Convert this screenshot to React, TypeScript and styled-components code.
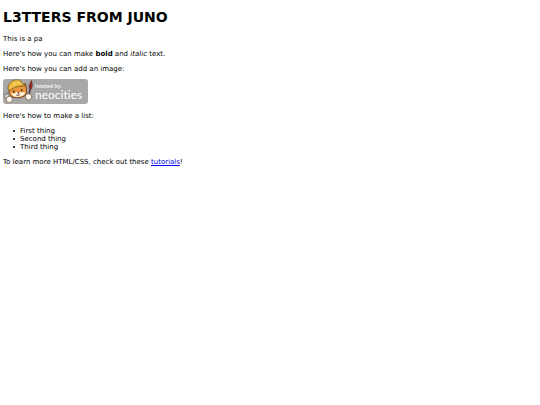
import React from "react";
import styled, { createGlobalStyle } from "styled-components";

const GlobalStyle = createGlobalStyle`
  body {
    margin: 0;
    background: #fff;
    color: #000;
    font-family: "DejaVu Sans", Verdana, sans-serif;
    font-size: 7px;
    line-height: 8px;
  }
`;

const Page = styled.main`
  padding: 9px 3px;
`;

const Title = styled.h1`
  margin: 0 0 9px;
  font-size: 14px;
  line-height: 17px;
`;

const Paragraph = styled.p`
  margin: 0 0 7px;
`;

const BadgeFigure = styled.figure`
  margin: 6px 0 8px;
`;

const IntroParagraph = styled(Paragraph)`
  margin-bottom: 6px;
`;

const Badge = styled.svg`
  display: block;
  width: 85px;
  height: 25px;
`;

const BadgeText = styled.text<{ $size: number }>`
  fill: #fff;
  font-family: Lato, "Open Sans", sans-serif;
  font-size: ${({ $size }) => $size}px;
  font-variant-ligatures: none;
`;

const List = styled.ul`
  margin: 0 0 7px;
  padding: 0 0 0 10px;
  list-style: none;
`;

const ListItem = styled.li`
  display: flex;
  align-items: center;
  gap: 5px;

  &::before {
    content: "";
    width: 2px;
    height: 2px;
    border-radius: 1px;
    background: #000;
  }
`;

const Link = styled.a`
  color: #0000ee;
  text-decoration: underline;
`;

function NeocitiesBadge() {
  return (
    <Badge viewBox="0 0 85 25" role="img" aria-label="Hosted by Neocities">
      <rect width="85" height="25" rx="3" fill="#a8a8a8" />
      {/* wrench */}
      <path d="M.8 14.3 2.6 16l1.7-.6.3-1.8 1.4 2-.6 2 2.5 3-1.6 1-2.7-3-2.2-.7Z" fill="#dedede" stroke="#555" strokeWidth=".6" />
      {/* brush */}
      <path d="m24.5 17 2.2-7.5 1.6.6-2.5 7.6Z" fill="#4b3838" />
      <path d="M26.2 9.4c-.7-3.2 1.2-4.9 2.3-8.1.9 3.3 1.3 6.4-.5 8.8Z" fill="#9e2925" stroke="#542523" strokeWidth=".6" />
      {/* head */}
      <path d="M7 8c-2 4-1 9 3.2 10.2 4.8 1.4 11.2.4 12.8-3.2 1.3-3 .3-7.3-1-10.7l-3 2.6Z" fill="#ed963b" stroke="#65391d" strokeWidth=".9" />
      <path d="M8.2 14.5c2.3-.8 3.8.2 5.3-1.6l2-.2c1.4 1.8 3.9.1 6.8.9-.7 4.5-12.2 6.5-14.1.9Z" fill="#fff5df" />
      <path d="M5 10.6C4.5 4.5 9.1.8 13.7.8c3.3 0 5.4 1.6 6.5 4.7L22.6 7c-5.3-.4-10.3.5-15.8 4.5Z" fill="#e9b83c" stroke="#80581e" strokeWidth=".8" />
      <path d="M7.2 7.5c3-3 6.8-3.9 11.6-3.2M11 2.2l1 5M15 1.4l1 4.2" fill="none" stroke="#ffe080" strokeWidth=".7" />
      <ellipse cx="10.9" cy="12.7" rx=".8" ry="1.1" fill="#2b201b" />
      <ellipse cx="18.8" cy="11.2" rx=".8" ry="1.1" fill="#2b201b" />
      <path d="m14.3 13.5 1.9-.3-.8 1.3Zm1.1 1-.3 1.2m-2 .2c1.5.9 3 .5 4-.6" fill="#8a382b" stroke="#65382b" strokeWidth=".5" />
      {/* paws */}
      <circle cx="6.3" cy="20.4" r="3.1" fill="#fffdf4" stroke="#705030" strokeWidth=".7" />
      <circle cx="25.6" cy="17.8" r="3.1" fill="#fffdf4" stroke="#705030" strokeWidth=".7" />
      <BadgeText x="32" y="9" $size={6}>hosted by</BadgeText>
      <BadgeText x="32" y="20" $size={12}>neocities</BadgeText>
    </Badge>
  );
}

export default function App() {
  return (
    <>
      <GlobalStyle />
      <Page>
        <Title>L3TTERS FROM JUNO</Title>
        <Paragraph>This is a pa</Paragraph>
        <Paragraph>
          Here's how you can make <strong>bold</strong> and <em>italic</em> text.
        </Paragraph>
        <IntroParagraph>Here's how you can add an image:</IntroParagraph>
        <BadgeFigure>
          <NeocitiesBadge />
        </BadgeFigure>
        <Paragraph>Here's how to make a list:</Paragraph>
        <List>
          <ListItem>First thing</ListItem>
          <ListItem>Second thing</ListItem>
          <ListItem>Third thing</ListItem>
        </List>
        <Paragraph>
          To learn more HTML/CSS, check out these <Link href="#tutorials">tutorials</Link>!
        </Paragraph>
      </Page>
    </>
  );
}
